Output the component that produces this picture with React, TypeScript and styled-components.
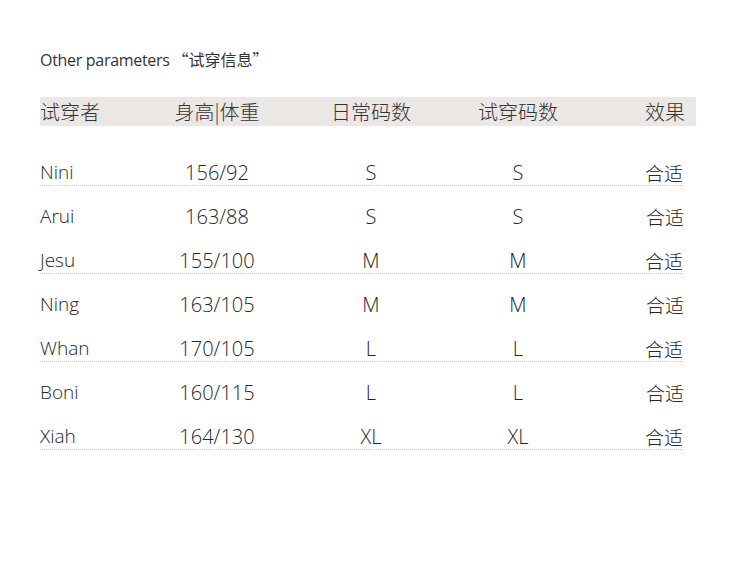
import React from "react";
import styled, { createGlobalStyle } from "styled-components";

const Global = createGlobalStyle`
  html, body { margin: 0; padding: 0; background: #ffffff; }
  body { font-family: "Open Sans", "Noto Sans CJK SC", sans-serif; font-weight: 300; color: #2a2a2a; }
`;

const Page = styled.div`
  padding: 49px 0 0 40px;
  width: 710px;
`;

const Title = styled.div`
  font-size: 16px;
  line-height: 20px;
  color: #333;
  font-weight: 400;
  letter-spacing: -0.3px;
`;

const Quote = styled.span`
  font-family: "Noto Sans CJK SC", sans-serif;
  letter-spacing: 0;
  margin-left: 3px;
`;

const cols = "100px 154px 154px 140px 1fr";

const HeaderBar = styled.div`
  margin-top: 27px;
  width: 656px;
  height: 29px;
  box-sizing: border-box;
  padding-right: 11px;
  background: #ebe7e4;
  display: grid;
  grid-template-columns: ${cols};
  align-items: center;
  font-size: 20px;
  line-height: 29px;
  color: #333;
  font-family: "Noto Sans CJK SC", sans-serif;
  font-weight: 300;
`;

const Body = styled.div`
  margin-top: 24px;
  width: 644px;
`;

const Row = styled.div<{ $line: boolean }>`
  display: grid;
  grid-template-columns: ${cols};
  height: 36px;
  box-sizing: border-box;
  padding-top: 10px;
  margin-bottom: 8px;
  line-height: 25px;
  font-size: 20px;
  color: #262626;
  border-bottom: 1px dotted ${(p) => (p.$line ? "#c4c4c4" : "transparent")};
  margin-right: ${(p) => (p.$line ? "1px" : "0")};
`;

const Cell = styled.div<{ $align: "left" | "center" | "right" }>`
  text-align: ${(p) => p.$align};
  white-space: nowrap;
`;

const NameCell = styled(Cell)`
  font-size: 19px;
`;

const CjkCell = styled(Cell)`
  font-family: "Noto Sans CJK SC", sans-serif;
  font-size: 19px;
`;

const data = [
  ["Nini", "156/92", "S", "S"],
  ["Arui", "163/88", "S", "S"],
  ["Jesu", "155/100", "M", "M"],
  ["Ning", "163/105", "M", "M"],
  ["Whan", "170/105", "L", "L"],
  ["Boni", "160/115", "L", "L"],
  ["Xiah", "164/130", "XL", "XL"],
];

export default function App() {
  return (
    <>
      <Global />
      <Page>
        <Title>
          Other parameters<Quote>“试穿信息”</Quote>
        </Title>
        <HeaderBar>
          <Cell $align="left">试穿者</Cell>
          <Cell $align="center">身高|体重</Cell>
          <Cell $align="center">日常码数</Cell>
          <Cell $align="center">试穿码数</Cell>
          <Cell $align="right">效果</Cell>
        </HeaderBar>
        <Body>
          {data.map((r, i) => (
            <Row key={r[0]} $line={i % 2 === 0}>
              <NameCell $align="left">{r[0]}</NameCell>
              <Cell $align="center">{r[1]}</Cell>
              <Cell $align="center">{r[2]}</Cell>
              <Cell $align="center">{r[3]}</Cell>
              <CjkCell $align="right">合适</CjkCell>
            </Row>
          ))}
        </Body>
      </Page>
    </>
  );
}
